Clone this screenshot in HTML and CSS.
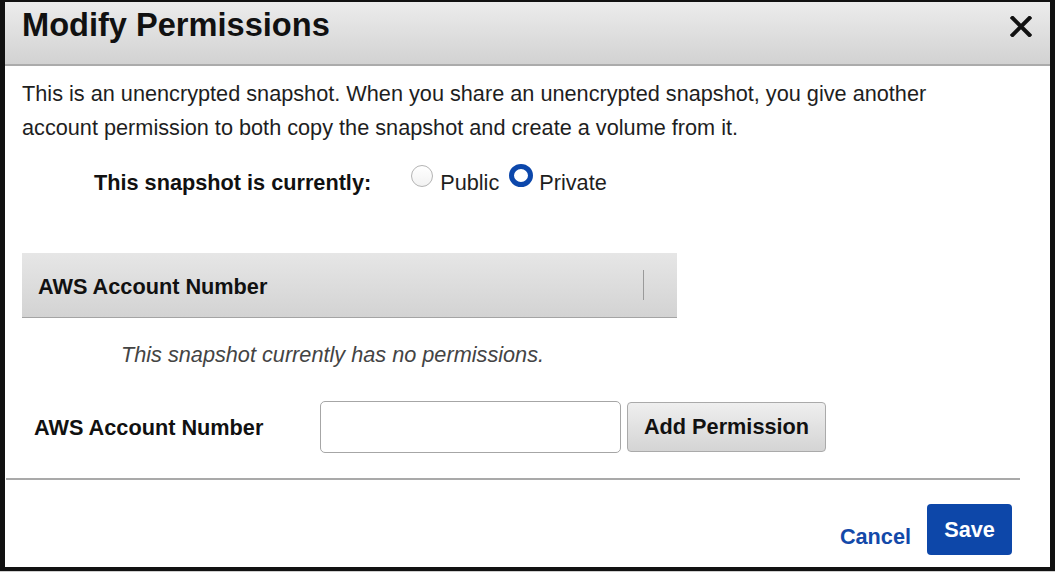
FILE: index.html
```html
<!DOCTYPE html>
<html lang="en">
<head>
<meta charset="utf-8">
<title>Modify Permissions</title>
<link rel="stylesheet" href="styles.css">
</head>
<body>
<div class="dialog">
  <div class="dialog-header">
    <h1 class="dialog-title">Modify Permissions</h1>
    <span class="close-btn" aria-label="Close">
      <svg width="22" height="21" viewBox="0 0 22 21"><path d="M2.5 2 L19.5 19 M19.5 2 L2.5 19" stroke="#111" stroke-width="4" stroke-linecap="square" fill="none"/></svg>
    </span>
  </div>
  <div class="dialog-body">
    <p class="intro">This is an unencrypted snapshot. When you share an unencrypted snapshot, you give another account permission to both copy the snapshot and create a volume from it.</p>
    <div class="status-row">
      <span class="status-label">This snapshot is currently:</span><span class="radio"></span><span class="radio-text">Public</span><span class="radio radio-on"></span><span class="radio-text">Private</span>
    </div>
    <div class="table-head">
      <div class="th-cell">AWS Account Number</div>
      <div class="th-sep"></div>
    </div>
    <div class="empty-row">
      <div class="empty-msg">This snapshot currently has no permissions.</div>
    </div>
    <div class="form-row">
      <label class="form-label">AWS Account Number</label>
      <input class="acct-input" type="text">
      <button class="add-btn">Add Permission</button>
    </div>
  </div>
  <div class="rule"></div>
  <div class="dialog-footer">
    <a class="cancel-link">Cancel</a>
    <button class="save-btn">Save</button>
  </div>
</div>
</body>
</html>
```
FILE: styles.css
```css
html, body {
  margin: 0;
  padding: 0;
}
body {
  width: 1055px;
  height: 572px;
  background: #cfcfcf;
  font-family: "Liberation Sans", Arial, sans-serif;
  font-size: 21.7px;
  color: #1e1e1e;
  overflow: hidden;
}
.dialog {
  box-sizing: border-box;
  width: 1055px;
  height: 571px;
  background: #fff;
  border-style: solid;
  border-color: #111;
  border-width: 2px 5px 4px 5px;
  display: flex;
  flex-direction: column;
}
.dialog-header {
  height: 64px;
  border-bottom: 2px solid #ababab;
  background: linear-gradient(#ececec, #d2d2d2);
  display: flex;
  justify-content: space-between;
  align-items: flex-start;
  padding: 3px 18px 0 17px;
}
.dialog-title {
  margin: 0;
  font-size: 32.6px;
  line-height: 40px;
  font-weight: bold;
  color: #111;
}
.close-btn {
  display: block;
  margin-top: 11px;
  width: 22px;
  height: 21px;
}
.close-btn svg { display: block; }
.dialog-body {
  padding: 0 17px;
}
.intro {
  margin: 11px 0 0 0;
  line-height: 34px;
  width: 930px;
}
.status-row {
  margin-top: 19px;
  line-height: 34px;
  padding-left: 72px;
  white-space: nowrap;
}
.status-label {
  font-weight: bold;
  color: #111;
  margin-right: 40px;
}
.radio {
  display: inline-block;
  box-sizing: border-box;
  width: 22px;
  height: 22px;
  border-radius: 50%;
  border: 1.5px solid #b4b4b4;
  background: linear-gradient(#fff, #f2f2f2);
  vertical-align: 3px;
  margin-right: 7px;
}
.radio-on {
  width: 24px;
  height: 23px;
  border: 5.5px solid #0c47ab;
  background: #fff;
  margin-right: 6px;
}
.radio-text {
  margin-right: 10px;
}
.table-head {
  margin-top: 53px;
  width: 655px;
  height: 64px;
  border-bottom: 1px solid #a4a4a4;
  background: linear-gradient(#e6e6e6, #d3d3d3);
  display: flex;
  align-items: center;
}
.th-cell {
  width: 605px;
  padding: 3px 0 0 16px;
  font-weight: bold;
  line-height: 34px;
  color: #111;
}
.th-sep {
  width: 1px;
  height: 30px;
  background: #9a9a9a;
}
.empty-row {
  margin-top: 20px;
  width: 621px;
}
.empty-msg {
  text-align: center;
  font-style: italic;
  line-height: 34px;
  color: #444;
}
.form-row {
  margin-top: 29px;
  display: flex;
  align-items: center;
  height: 52px;
}
.form-label {
  box-sizing: border-box;
  width: 298px;
  padding: 1px 0 0 12px;
  font-weight: bold;
  line-height: 34px;
  color: #111;
}
.acct-input {
  box-sizing: border-box;
  width: 301px;
  height: 52px;
  border: 1px solid #a6a6a6;
  border-radius: 5px;
  background: #fff;
  margin: 0;
  padding: 0 8px;
  font: inherit;
}
.add-btn {
  box-sizing: border-box;
  margin: 0 0 0 6px;
  width: 199px;
  height: 50px;
  border: 1px solid #aaa;
  border-radius: 4px;
  background: linear-gradient(#efefef, #d4d4d4);
  font-family: inherit;
  font-size: 21.7px;
  font-weight: bold;
  color: #111;
  padding: 0;
}
.rule {
  margin: 25px 30px 0 1px;
  height: 2px;
  background: #a9a9a9;
}
.dialog-footer {
  flex: 1;
  display: flex;
  justify-content: flex-end;
  align-items: flex-end;
  padding: 24px 38px 12px 0;
}
.cancel-link {
  font-weight: bold;
  color: #1349a9;
  line-height: 34px;
  margin: 0 16px 1px 0;
  cursor: pointer;
}
.save-btn {
  box-sizing: border-box;
  width: 85px;
  height: 51px;
  border: none;
  border-radius: 4px;
  background: #0d47a9;
  color: #fff;
  font-family: inherit;
  font-size: 21.7px;
  font-weight: bold;
  padding: 0;
}
```
